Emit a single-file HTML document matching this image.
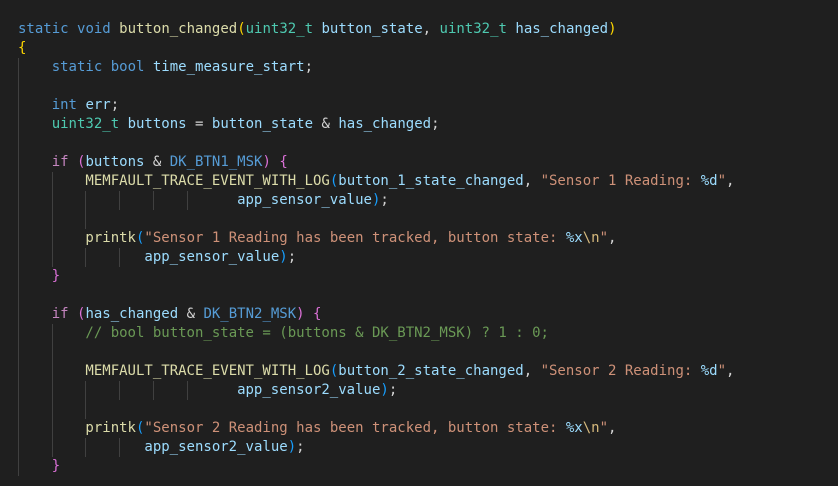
<!DOCTYPE html>
<html><head><meta charset="utf-8"><style>
html,body{margin:0;padding:0;background:#1f1f1f;width:838px;height:486px;overflow:hidden}
pre{margin:0;position:absolute;left:18px;top:20px;font-family:"DejaVu Sans Mono","Liberation Mono",monospace;font-size:14px;line-height:19px;color:#d4d4d4;white-space:pre}
.l{height:19px}
i{display:inline-block;width:4ch;height:19px;vertical-align:top;box-sizing:border-box;border-left:1px solid #404040;margin-left:0}
i.w3{width:3ch}i.w6{width:6ch}
.k{color:#569cd6}.fn{color:#dcdcaa}.t{color:#4ec9b0}.v{color:#9cdcfe}.s{color:#ce9178}.c{color:#6a9955}.p{color:#c586c0}
.b1{color:#ffd700}.b2{color:#da70d6}.b3{color:#179fff}.e{color:#d7ba7d}
</style></head><body><pre>
<div class="l"><span class="k">static</span> <span class="k">void</span> <span class="fn">button_changed</span><span class="b1">(</span><span class="t">uint32_t</span> <span class="v">button_state</span>, <span class="t">uint32_t</span> <span class="v">has_changed</span><span class="b1">)</span></div><div class="l"><span class="b1">{</span></div><div class="l"><i></i><span class="k">static</span> <span class="k">bool</span> <span class="v">time_measure_start</span>;</div><div class="l"><i></i></div><div class="l"><i></i><span class="k">int</span> <span class="v">err</span>;</div><div class="l"><i></i><span class="t">uint32_t</span> <span class="v">buttons</span> = <span class="v">button_state</span> &amp; <span class="v">has_changed</span>;</div><div class="l"><i></i></div><div class="l"><i></i><span class="p">if</span> <span class="b2">(</span><span class="v">buttons</span> &amp; <span class="k">DK_BTN1_MSK</span><span class="b2">)</span> <span class="b2">{</span></div><div class="l"><i></i><i></i><span class="fn">MEMFAULT_TRACE_EVENT_WITH_LOG</span><span class="b3">(</span><span class="v">button_1_state_changed</span>, <span class="s">"Sensor 1 Reading: </span><span class="v">%d</span><span class="s">"</span>,</div><div class="l"><i></i><i></i><i></i><i></i><i></i><i class="w6"></i><span class="v">app_sensor_value</span><span class="b3">)</span>;</div><div class="l"><i></i><i></i><i></i></div><div class="l"><i></i><i></i><span class="fn">printk</span><span class="b3">(</span><span class="s">"Sensor 1 Reading has been tracked, button state: </span><span class="v">%x</span><span class="e">\n</span><span class="s">"</span>,</div><div class="l"><i></i><i></i><i></i><i class="w3"></i><span class="v">app_sensor_value</span><span class="b3">)</span>;</div><div class="l"><i></i><span class="b2">}</span></div><div class="l"><i></i></div><div class="l"><i></i><span class="p">if</span> <span class="b2">(</span><span class="v">has_changed</span> &amp; <span class="k">DK_BTN2_MSK</span><span class="b2">)</span> <span class="b2">{</span></div><div class="l"><i></i><i></i><span class="c">// bool button_state = (buttons &amp; DK_BTN2_MSK) ? 1 : 0;</span></div><div class="l"><i></i><i></i></div><div class="l"><i></i><i></i><span class="fn">MEMFAULT_TRACE_EVENT_WITH_LOG</span><span class="b3">(</span><span class="v">button_2_state_changed</span>, <span class="s">"Sensor 2 Reading: </span><span class="v">%d</span><span class="s">"</span>,</div><div class="l"><i></i><i></i><i></i><i></i><i></i><i class="w6"></i><span class="v">app_sensor2_value</span><span class="b3">)</span>;</div><div class="l"><i></i><i></i><i></i></div><div class="l"><i></i><i></i><span class="fn">printk</span><span class="b3">(</span><span class="s">"Sensor 2 Reading has been tracked, button state: </span><span class="v">%x</span><span class="e">\n</span><span class="s">"</span>,</div><div class="l"><i></i><i></i><i></i><i class="w3"></i><span class="v">app_sensor2_value</span><span class="b3">)</span>;</div><div class="l"><i></i><span class="b2">}</span></div></pre></body></html>
